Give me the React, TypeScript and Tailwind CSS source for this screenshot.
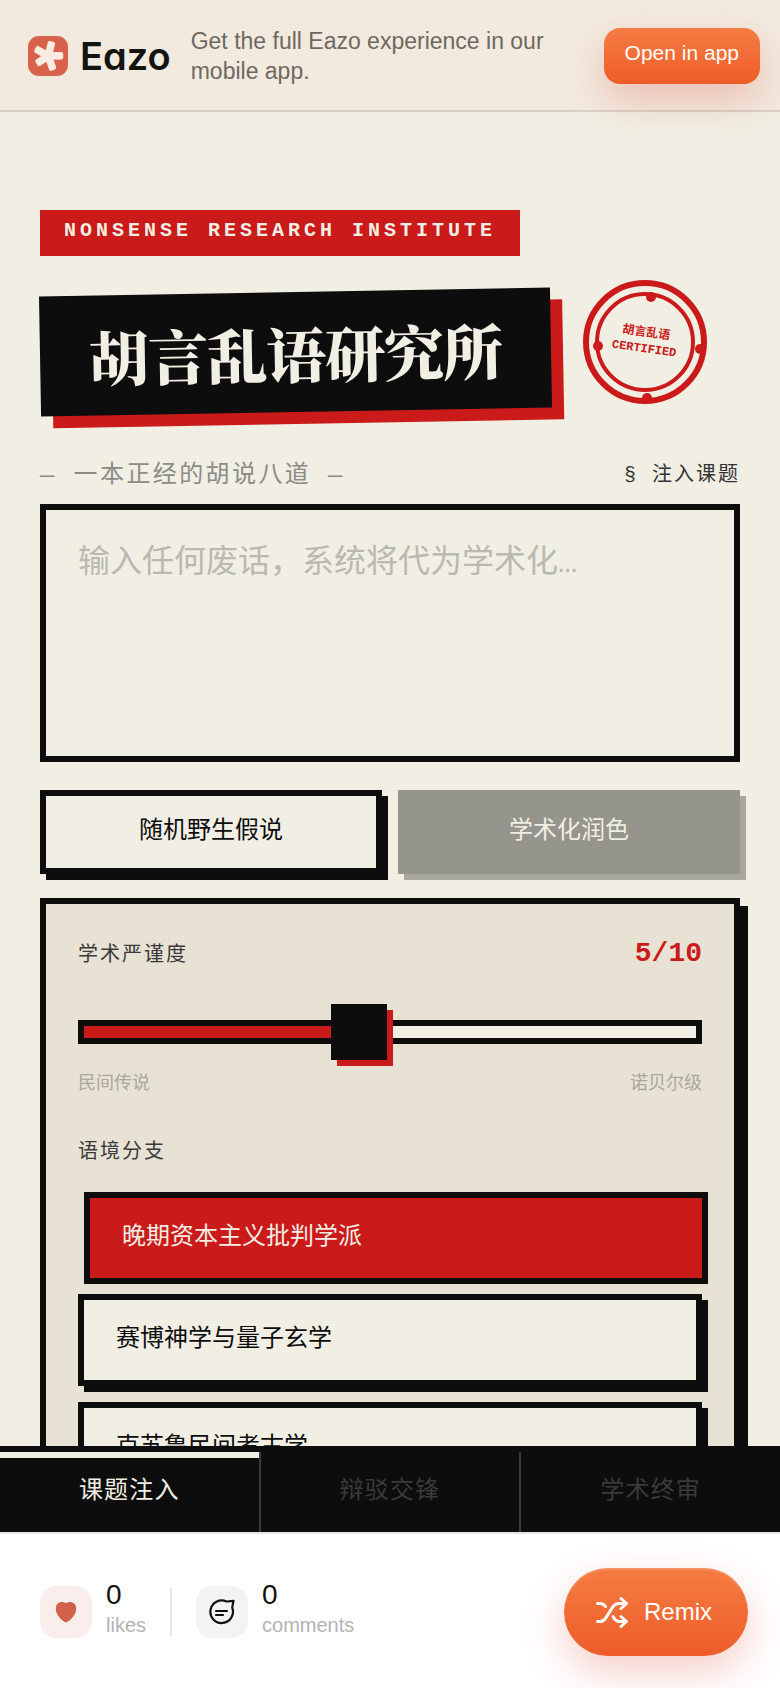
import { useState } from "react"
import type { CSSProperties } from "react"

const branches = ["晚期资本主义批判学派", "赛博神学与量子玄学", "克苏鲁民间考古学"]
const tabs = ["课题注入", "辩驳交锋", "学术终审"]

function LogoMark() {
  return (
    <svg viewBox="0 0 40 40" className="size-10 shrink-0" aria-hidden="true">
      <rect width="40" height="40" rx="11" fill="#d9634a" />
      <g fill="#f8ece2">
        <rect x="16.5" y="5" width="7.500" height="16" rx="2" transform="rotate(14 20.200 20)" />
        <rect x="16.5" y="5" width="7.500" height="16" rx="2" transform="rotate(89 20.200 20)" />
        <rect x="16.5" y="5" width="7.500" height="16" rx="2" transform="rotate(160 20.200 20)" />
        <rect x="16.5" y="6" width="7.500" height="15" rx="2" transform="rotate(236 20.200 20)" />
        <rect x="16.5" y="5" width="7.500" height="16" rx="2" transform="rotate(300 20.200 20)" />
      </g>
    </svg>
  )
}

function Stamp() {
  return (
    <div className="relative size-[124px] shrink-0 text-[#cb1a1a]">
      <svg viewBox="0 0 124 124" className="size-full" fill="none" aria-hidden="true">
        <circle cx="62" cy="62" r="59" stroke="currentColor" strokeWidth="6" />
        <circle cx="62" cy="62" r="48" stroke="currentColor" strokeWidth="4" />
        <g fill="currentColor">
          <circle cx="68" cy="17" r="5" />
          <circle cx="15" cy="66" r="5" />
          <circle cx="117" cy="69" r="5" />
          <circle cx="64" cy="118" r="5" />
        </g>
      </svg>
      <div className="absolute inset-0 flex rotate-8 flex-col items-center justify-center pb-0.5 text-center text-xs leading-4 font-bold">
        <span>胡言乱语</span>
        <span>CERTIFIED</span>
      </div>
    </div>
  )
}

function HeartIcon() {
  return (
    <svg viewBox="0 0 24 24" className="size-6" fill="#d1614a" aria-hidden="true">
      <path d="M12 22.6C9.4 21.3 1.8 16 1.8 8.4 1.8 4.6 4.4 2 7.7 2c1.6 0 3.1.4 4.3 1.3C13.2 2.400 14.700 2 16.300 2c3.300 0 5.900 2.600 5.900 6.400 0 7.600-7.600 12.900-10.200 14.200z" />
    </svg>
  )
}

function CommentIcon() {
  return (
    <svg viewBox="0 0 28 28" className="size-7" fill="none" stroke="#111" strokeWidth="2.2" strokeLinejoin="round" strokeLinecap="round" aria-hidden="true">
      <path d="M18.500 3.500A11.300 11.300 0 1 0 24.200 9.600L25.500 2.800z" />
      <path d="M8 13h11M8 17h7" />
    </svg>
  )
}

function RemixIcon() {
  return (
    <svg viewBox="0 0 32 32" className="size-8" fill="none" stroke="currentColor" strokeWidth="3" strokeLinecap="round" strokeLinejoin="round" aria-hidden="true">
      <path d="M1.500 25.500h2.500c2.500 0 4-1 5.500-3l6.500-10.500c2-3.200 4-4.500 7-4.500h7" />
      <path d="M1.500 7.500h2.500c2.500 0 4 .8 5.500 3" />
      <path d="M17 20.500c1.800 3.500 3.500 5 6.500 5h6.500" />
      <path d="M25 2.500l5.500 5-5.500 5M25 20.500l5.500 5-5.500 5" />
    </svg>
  )
}

export default function App() {
  const [topic, setTopic] = useState("")
  const [rigor, setRigor] = useState(5)
  const [branch, setBranch] = useState(0)
  const [tab, setTab] = useState(0)

  return (
    <div className="flex h-screen flex-col overflow-hidden bg-[#f1efe4] font-['Liberation_Mono','Noto_Sans_CJK_SC',monospace] text-[#0d0d0d]">
      {/* App banner */}
      <header className="relative z-10 flex shrink-0 items-center border-b-2 border-[#d9d1c7] bg-[#f2eadf] pt-[26px] pr-5 pb-6 pl-7 font-['Liberation_Sans',sans-serif]">
        <a href="#" className="flex items-center gap-3">
          <LogoMark />
          <span className="font-['Inter',sans-serif] text-[38px] leading-10 font-semibold text-[#14140f] [font-feature-settings:'cv11']">Eazo</span>
        </a>
        <p className="ml-5 flex-1 text-[23px] leading-[30px] text-[#6f6860]">
          Get the full Eazo experience in our mobile app.
        </p>
        <button className="ml-6 h-14 shrink-0 rounded-2xl bg-linear-to-b from-[#f57c43] to-[#ee5b28] px-[21px] pb-1.5 text-[21px] text-white shadow-[0_16px_40px_rgba(220,80,60,0.28)]">
          Open in app
        </button>
      </header>

      <main className="min-h-0 flex-1 overflow-y-auto px-10 pt-[98px] pb-10 [scrollbar-width:none]">
        {/* Masthead */}
        <div className="flex">
          <p className="bg-[#cb1a1a] px-6 pt-2 pb-3 text-xl leading-[26px] font-bold tracking-[4px] text-[#f1efe4]">
            NONSENSE RESEARCH INSTITUTE
          </p>
        </div>
        <div className="mt-6 flex items-start gap-8">
          <h1 className="mt-3 -rotate-1 bg-[#0d0d0d] px-[49px] py-5 font-['Noto_Serif_CJK_SC','Noto_Serif_SC','Noto_Sans_CJK_SC',serif] text-[60px] leading-[80px] font-black tracking-[-1px] whitespace-nowrap text-[#f1efe4] shadow-[12px_12px_0_#cb1a1a]">
            胡言乱语研究所
          </h1>
          <Stamp />
        </div>

        <div className="mt-[46px] flex items-center justify-between">
          <p className="text-2xl leading-9 tracking-[2.4px] text-[#8c8b85]">— 一本正经的胡说八道 —</p>
          <label htmlFor="topic" className="text-xl leading-9 tracking-[2px] text-[#333]">
            § 注入课题
          </label>
        </div>
        <textarea
          id="topic"
          value={topic}
          onChange={(e) => setTopic(e.target.value)}
          placeholder="输入任何废话，系统将代为学术化…"
          className="mt-2.5 block h-[258px] w-full resize-none border-6 border-[#0d0d0d] bg-transparent px-8 py-[27px] text-[32px] leading-[54px] outline-none placeholder:text-[#b9b8b1]"
        />

        <div className="mt-7 grid grid-cols-2 gap-4 text-2xl">
          <button className="h-[84px] border-6 border-[#0d0d0d] bg-[#f1efe4] shadow-[6px_6px_0_#0d0d0d]">随机野生假说</button>
          <button
            disabled={!topic}
            className="h-[84px] border-6 border-[#0d0d0d] bg-[#0d0d0d] text-[#f1efe4] shadow-[6px_6px_0_#3a3a3a] disabled:opacity-40"
          >
            学术化润色
          </button>
        </div>

        {/* Settings */}
        <section className="mt-6 border-6 border-[#0d0d0d] bg-[#e8e2d4] p-8 shadow-[8px_8px_0_#0d0d0d]">
          <div className="flex h-9 items-center justify-between">
            <label htmlFor="rigor" className="pt-1 text-xl tracking-[2px] text-[#3a3a3a]">
              学术严谨度
            </label>
            <output htmlFor="rigor" className="text-[28px] font-bold text-[#cb1a1a]">
              {rigor}/10
            </output>
          </div>
          <input
            id="rigor"
            type="range"
            min={1}
            max={10}
            value={rigor}
            onChange={(e) => setRigor(Number(e.target.value))}
            style={{ "--fill": `${((rigor - 1) / 9) * 100}%` } as CSSProperties}
            className="mt-8 block h-14 w-full appearance-none bg-transparent [&::-webkit-slider-runnable-track]:h-6 [&::-webkit-slider-runnable-track]:border-6 [&::-webkit-slider-runnable-track]:border-[#0d0d0d] [&::-webkit-slider-runnable-track]:bg-[linear-gradient(to_right,#cb1a1a_var(--fill),#f1efe4_var(--fill))] [&::-webkit-slider-thumb]:-mt-[22px] [&::-webkit-slider-thumb]:size-14 [&::-webkit-slider-thumb]:appearance-none [&::-webkit-slider-thumb]:bg-[#0d0d0d] [&::-webkit-slider-thumb]:shadow-[6px_6px_0_#cb1a1a]"
          />
          <div className="mt-2.5 flex justify-between text-lg leading-7 text-[#aaa79d]">
            <span>民间传说</span>
            <span>诺贝尔级</span>
          </div>

          <h2 className="mt-10 text-xl leading-[30px] tracking-[2px] text-[#3a3a3a]">语境分支</h2>
          <div className="mt-[18px] flex flex-col gap-4">
            {branches.map((name, i) => (
              <button
                key={name}
                aria-pressed={branch === i}
                onClick={() => setBranch(i)}
                className={`h-[92px] border-6 border-[#0d0d0d] px-8 text-left text-2xl ${
                  branch === i
                    ? "translate-x-1.5 translate-y-1.5 bg-[#cb1a1a] text-[#f1efe4]"
                    : "bg-[#f1efe4] shadow-[6px_6px_0_#0d0d0d]"
                }`}
              >
                {name}
              </button>
            ))}
          </div>
        </section>
      </main>

      {/* Tabs */}
      <nav className="flex h-[86px] shrink-0 border-t-6 border-[#0d0d0d] bg-[#0d0d0d]">
        {tabs.map((name, i) => (
          <button
            key={name}
            onClick={() => setTab(i)}
            className={`flex-1 border-r-2 border-[#3a3a3a] text-2xl tracking-[1.2px] last:border-r-0 ${
              tab === i ? "text-[#f1efe4] shadow-[inset_0_6px_0_#f1efe4]" : "text-[#3a3a3a]"
            }`}
          >
            {name}
          </button>
        ))}
      </nav>

      {/* Social bar */}
      <footer className="flex h-[156px] shrink-0 items-center border-t-2 border-[#e5e5e5] bg-white pt-0.5 pr-8 pl-10 font-['Liberation_Sans',sans-serif]">
        <button className="flex items-center gap-3.5 text-left">
          <span className="flex size-13 items-center justify-center rounded-2xl bg-[#faeeec]">
            <HeartIcon />
          </span>
          <span className="flex flex-col gap-0.5 pb-2">
            <span className="text-[28px] leading-8 text-[#111]">0</span>
            <span className="text-xl leading-6 text-[#b3b3b3]">likes</span>
          </span>
        </button>
        <div className="mx-6 h-12 w-0.5 bg-[#e5e5e5]" />
        <button className="flex items-center gap-3.5 text-left">
          <span className="flex size-13 items-center justify-center rounded-2xl bg-[#f3f3f3]">
            <CommentIcon />
          </span>
          <span className="flex flex-col gap-0.5 pb-2">
            <span className="text-[28px] leading-8 text-[#111]">0</span>
            <span className="text-xl leading-6 text-[#b3b3b3]">comments</span>
          </span>
        </button>
        <button className="ml-auto flex h-[88px] items-center gap-4 rounded-full bg-linear-to-b from-[#f57c43] to-[#ee5b28] pr-9 pl-8 text-2xl text-white shadow-[0_16px_40px_rgba(220,80,60,0.28),inset_0_2px_0_rgba(255,255,255,0.15)]">
          <RemixIcon />
          Remix
        </button>
      </footer>
    </div>
  )
}
